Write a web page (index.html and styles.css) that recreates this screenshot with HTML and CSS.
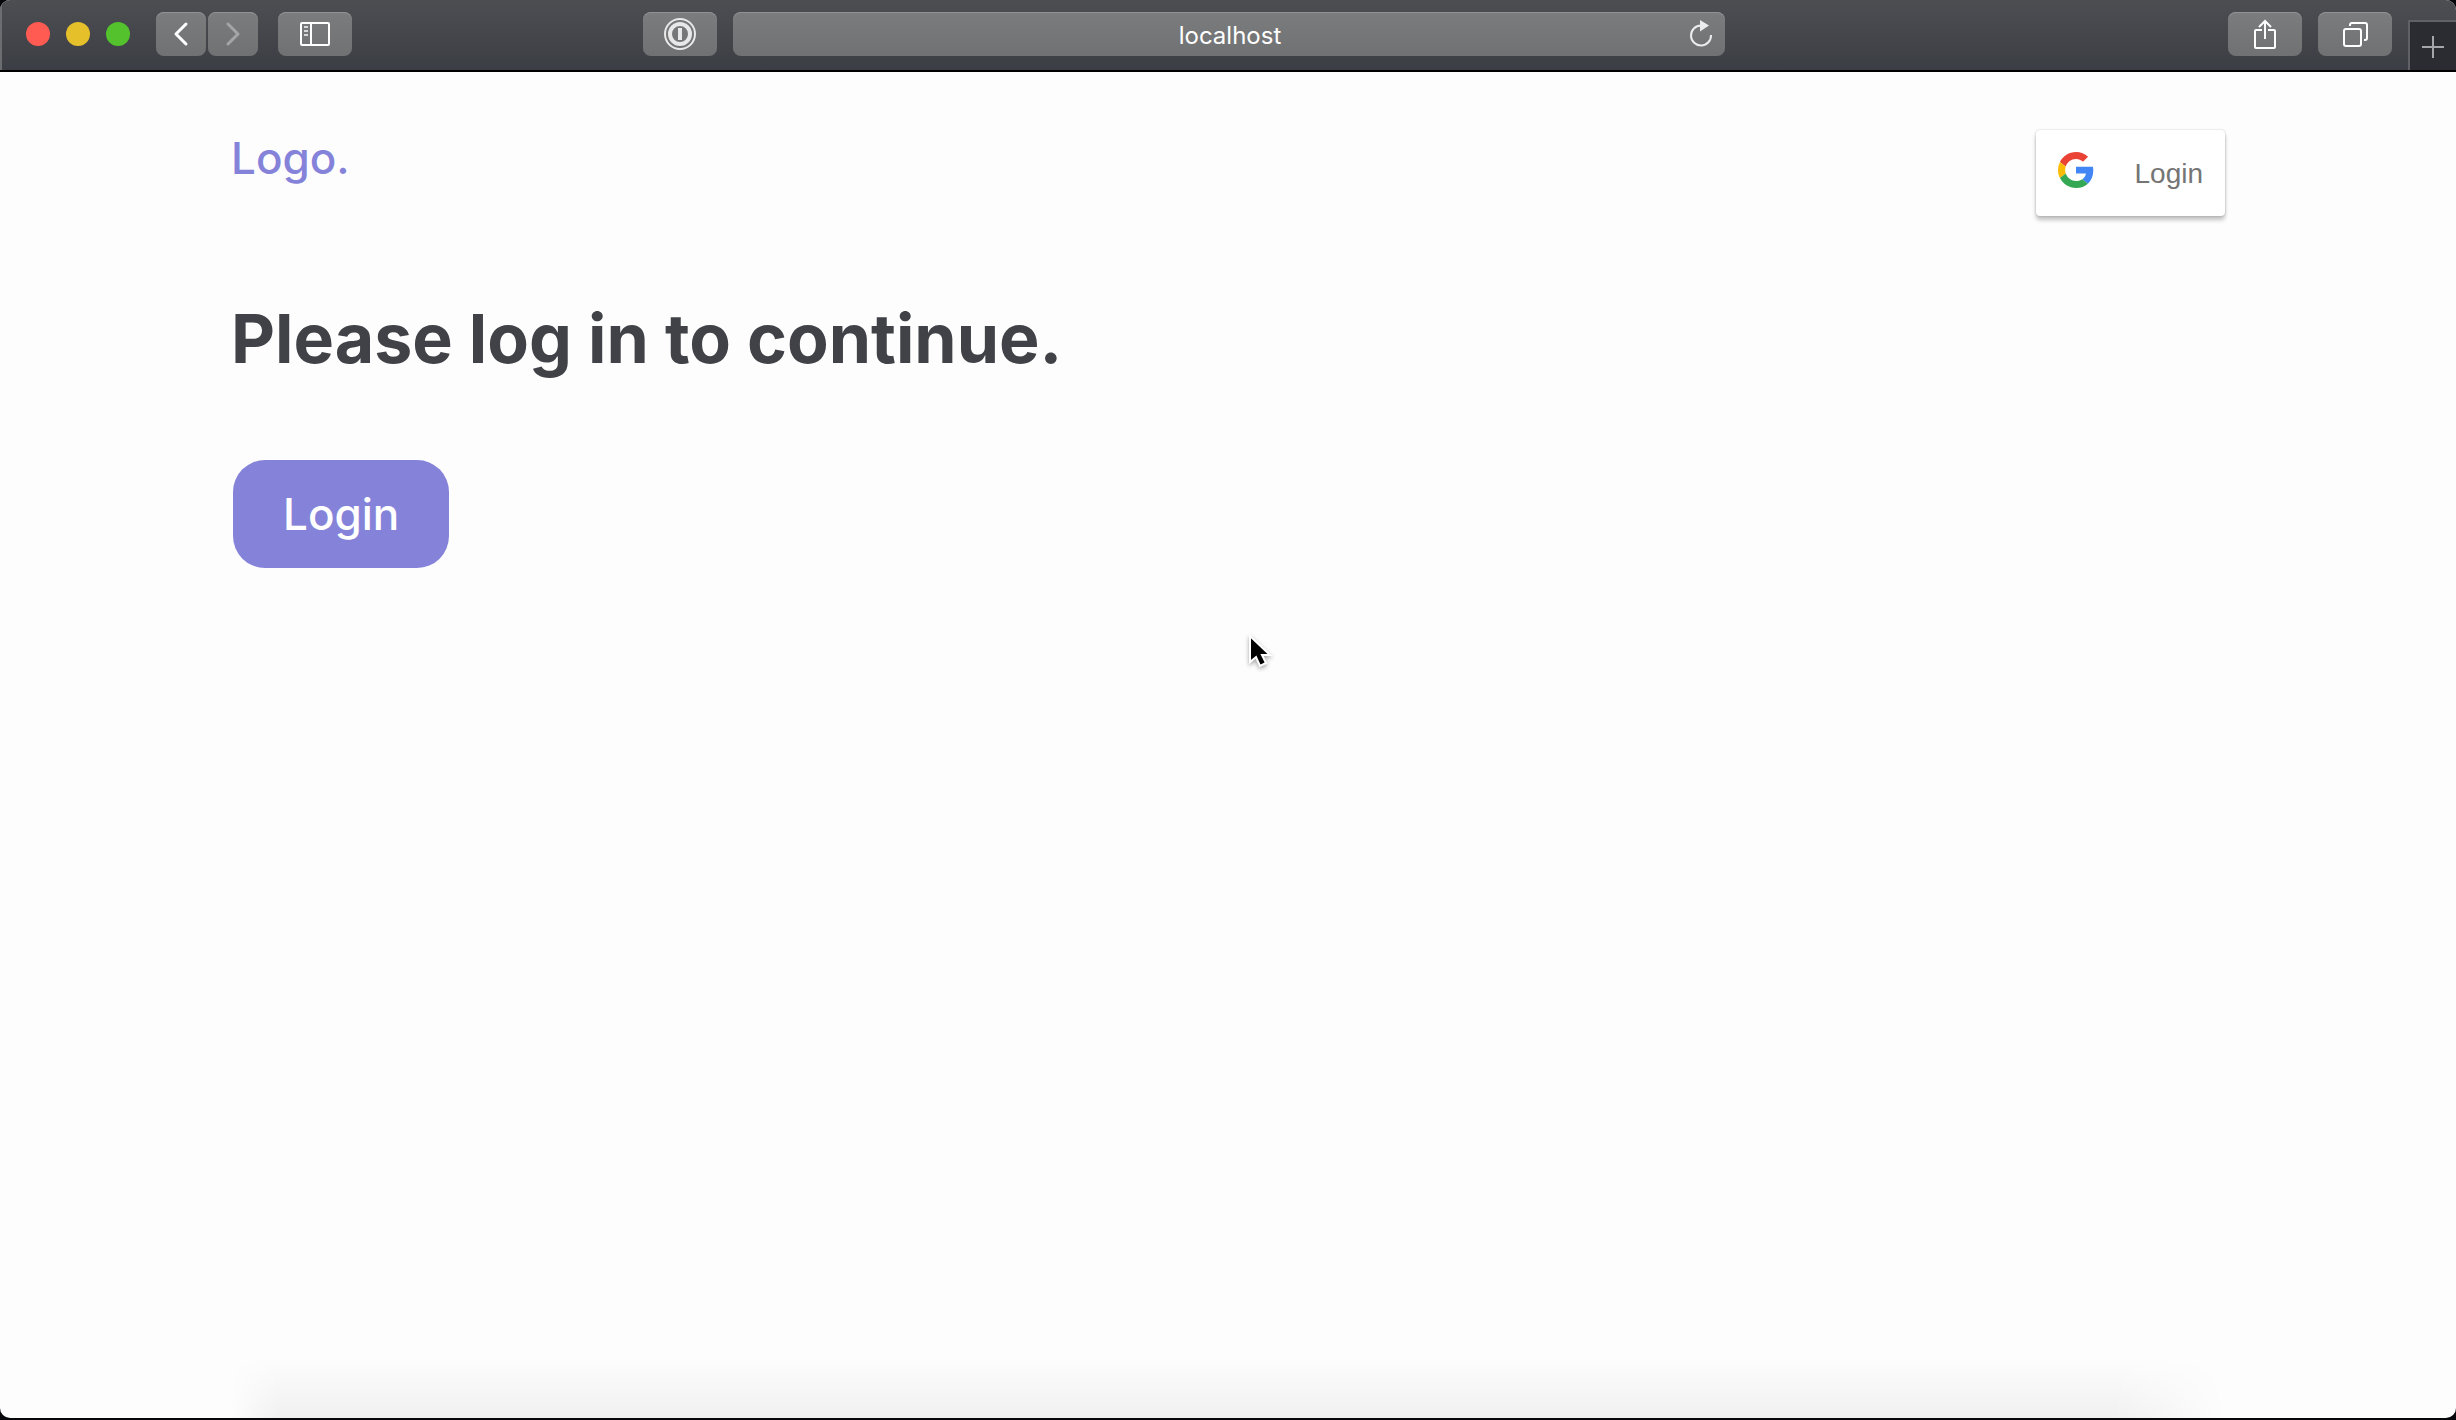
FILE: index.html
```html
<!DOCTYPE html>
<html lang="en">
<head>
<meta charset="utf-8">
<title>localhost</title>
<link rel="stylesheet" href="styles.css">
</head>
<body>
<div class="window">
  <header class="toolbar">
    <div class="lights">
      <button class="light light-close" aria-label="Close window"></button>
      <button class="light light-minimise" aria-label="Minimise window"></button>
      <button class="light light-zoom" aria-label="Zoom window"></button>
    </div>
    <div class="history">
      <button class="tool tool-narrow" aria-label="Back">
        <svg width="16" height="28" viewBox="0 0 16 28"><path d="M13 4 3 14l10 10" fill="none" stroke="#fff" stroke-width="3" stroke-linecap="round" stroke-linejoin="round"/></svg>
      </button>
      <button class="tool tool-narrow" aria-label="Forward">
        <svg width="16" height="28" viewBox="0 0 16 28"><path d="M3 4l10 10L3 24" fill="none" stroke="#a4a5a6" stroke-width="3" stroke-linecap="round" stroke-linejoin="round"/></svg>
      </button>
    </div>
    <button class="tool" aria-label="Show sidebar">
      <svg width="30" height="24" viewBox="0 0 30 24" fill="none" stroke="#fff" stroke-width="2"><rect x="1" y="1" width="28" height="22" rx="1"/><path d="M11 1v22"/><path d="M4 5h4M4 9h4M4 13h4" stroke="#d8d8d8"/></svg>
    </button>
    <div class="address-area">
      <button class="tool" aria-label="Password manager">
        <svg width="32" height="32" viewBox="0 0 32 32" fill="none" stroke="#e8e8e8"><circle cx="16" cy="16" r="15" stroke-width="2"/><circle cx="16" cy="16" r="10" stroke-width="4"/><path d="M16 10v12" stroke-width="4"/></svg>
      </button>
      <div class="address">
        <input class="address-input" type="text" value="localhost" aria-label="Address">
        <button class="reload" aria-label="Reload page">
          <svg width="24" height="28" viewBox="0 0 24 28"><path d="M12 5.500A10 10 0 1 0 22 15" fill="none" stroke="#ececec" stroke-width="2"/><path d="M11 0l9 5.500-9 6z" fill="#ececec"/></svg>
        </button>
      </div>
    </div>
    <div class="actions">
      <button class="tool" aria-label="Share">
        <svg width="24" height="32" viewBox="0 0 24 32" fill="none" stroke="#fff" stroke-width="2"><path d="M9 12H3a1 1 0 0 0-1 1v16a1 1 0 0 0 1 1h18a1 1 0 0 0 1-1V13a1 1 0 0 0-1-1h-6"/><path d="M12 21V3M6 9l6-6 6 6"/></svg>
      </button>
      <button class="tool" aria-label="Show all tabs">
        <svg width="26" height="26" viewBox="0 0 26 26" fill="none" stroke="#fff" stroke-width="2"><rect x="2" y="8" width="17" height="17" rx="2"/><path d="M8 5V4a2 2 0 0 1 2-2h13a2 2 0 0 1 2 2v13a2 2 0 0 1-2 2h-1"/></svg>
      </button>
    </div>
    <button class="new-tab" aria-label="New tab">
      <svg width="22" height="22" viewBox="0 0 22 22"><path d="M11 0v22M0 11h22" stroke="#a5a6a9" stroke-width="2"/></svg>
    </button>
  </header>

  <div class="page">
    <nav class="site-nav">
      <a class="logo" href="#">Logo.</a>
      <button class="google-button">
        <svg width="36" height="36" viewBox="0 0 18 18" aria-hidden="true"><path d="M9 3.480c1.690 0 2.830.730 3.480 1.340l2.540-2.480C13.460.890 11.430 0 9 0 5.480 0 2.440 2.020.960 4.960l2.910 2.260C4.600 5.050 6.620 3.480 9 3.480z" fill="#EA4335"/><path d="M17.640 9.200c0-.740-.060-1.280-.190-1.840H9v3.340h4.960c-.100.830-.640 2.080-1.840 2.920l2.840 2.200c1.700-1.570 2.680-3.880 2.680-6.620z" fill="#4285F4"/><path d="M3.880 10.780A5.540 5.540 0 0 1 3.580 9c0-.620.110-1.220.290-1.780L.960 4.960A9.008 9.008 0 0 0 0 9c0 1.450.350 2.820.960 4.040l2.920-2.260z" fill="#FBBC05"/><path d="M9 18c2.430 0 4.470-.800 5.960-2.180l-2.840-2.200c-.760.530-1.780.900-3.120.900-2.380 0-4.400-1.570-5.120-3.740L.970 13.040C2.450 15.980 5.480 18 9 18z" fill="#34A853"/></svg>
        <span>Login</span>
      </button>
    </nav>
    <main class="content">
      <h1 class="headline">Please log in to continue.</h1>
      <button class="login-button">Login</button>
    </main>
    <div class="footer-shade"></div>
  </div>
</div>
<svg class="cursor" width="34" height="44" viewBox="0 0 34 44" aria-hidden="true"><path d="M6 4v26l6-5 4 9 6-3-4-8h8z" fill="#000" stroke="#fff" stroke-width="2"/></svg>
</body>
</html>
```
FILE: styles.css
```css
* {
  box-sizing: border-box;
}

body {
  margin: 0;
  background: #05070a;
  font-family: Inter, "Liberation Sans", sans-serif;
}

button {
  border: 0;
  padding: 0;
  font-family: inherit;
  cursor: pointer;
}

svg {
  display: block;
}

.window {
  display: flex;
  flex-direction: column;
  height: calc(100vh - 2px);
  overflow: hidden;
  border-radius: 10px;
  background: #fdfdfd;
}

/* Browser toolbar */
.toolbar {
  display: flex;
  align-items: flex-start;
  flex: none;
  height: 72px;
  padding: 12px 0 0 24px;
  border-bottom: 2px solid #000;
  background: linear-gradient(#4d4e52, #3b3e44);
  box-shadow: inset 2px 0 #6b6d70;
}

.lights {
  display: flex;
  align-items: center;
  gap: 16px;
  height: 44px;
  padding: 0 26px 0 2px;
}

.light {
  width: 24px;
  height: 24px;
  border-radius: 50%;
}

.light-close {
  background: #ff5b52;
}

.light-minimise {
  background: #e6c02a;
}

.light-zoom {
  background: #53c22c;
}

.history {
  display: flex;
  gap: 2px;
  margin-right: 20px;
}

.tool,
.address {
  height: 44px;
  border-radius: 8px;
  background: linear-gradient(#7b7c7e, #707173);
  box-shadow: inset 0 1px #919294;
}

.tool {
  display: flex;
  align-items: center;
  justify-content: center;
  flex: none;
  width: 74px;
}

.tool-narrow {
  width: 50px;
}

.address-area {
  display: flex;
  flex: 1;
  justify-content: center;
  gap: 16px;
  padding-right: 212px;
}

.address {
  position: relative;
  flex: 0 1 992px;
}

.address-input {
  width: 100%;
  height: 44px;
  padding: 2px 0 0 2px;
  border: 0;
  background: none;
  color: #fff;
  font: 24px Inter, sans-serif;
  text-align: center;
}

.reload {
  position: absolute;
  top: 8px;
  right: 12px;
  background: none;
}

.actions {
  display: flex;
  gap: 16px;
  margin-right: 16px;
}

.new-tab {
  display: flex;
  align-items: center;
  justify-content: center;
  width: 48px;
  height: 50px;
  padding-top: 2px;
  margin-top: 8px;
  border-top: 2px solid #5f6166;
  border-left: 2px solid #5f6166;
  background: #2a2c31;
}

/* Web page */
.page {
  display: flex;
  flex-direction: column;
  flex: 1;
}

.site-nav {
  display: flex;
  align-items: flex-start;
  justify-content: space-between;
  padding: 58px 231px 0;
}

.logo {
  color: #8583d9;
  font-size: 44px;
  font-weight: 500;
  line-height: 56px;
  text-decoration: none;
}

.google-button {
  display: flex;
  gap: 40px;
  height: 86px;
  padding: 22px 22px 0;
  border-radius: 4px;
  background: #fff;
  color: #757575;
  box-shadow: 0 4px 4px rgba(0, 0, 0, 0.24), 0 0 2px rgba(0, 0, 0, 0.24);
  font: 28px/44px "Liberation Sans", sans-serif;
}

.content {
  padding: 76px 231px 0;
}

.headline {
  margin: 0 0 76px;
  color: #404247;
  font-size: 68px;
  font-weight: 700;
  line-height: 92px;
}

.login-button {
  height: 108px;
  margin-left: 2px;
  padding: 0 50px;
  border-radius: 32px;
  background: #8583d9;
  color: #fff;
  font-size: 44px;
  font-weight: 500;
}

.footer-shade {
  height: 60px;
  margin: auto 231px 0;
  background: linear-gradient(rgba(0, 0, 0, 0), rgba(0, 0, 0, 0.05));
  mask-image: linear-gradient(90deg, transparent, #000 48px, #000 calc(100% - 112px), transparent);
}

.cursor {
  position: absolute;
  top: 632px;
  left: 1244px;
  filter: drop-shadow(0 2px 2px rgba(0, 0, 0, 0.35));
}
```
